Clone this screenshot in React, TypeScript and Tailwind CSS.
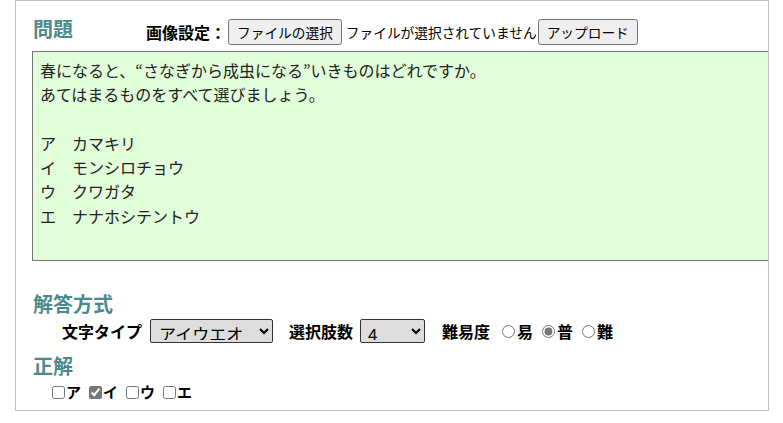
import React from "react";

const font = { fontFamily: '"Noto Sans CJK JP", "Noto Sans", sans-serif' };

const questionText = [
  "春になると、“さなぎから成虫になる”いきものはどれですか。",
  "あてはまるものをすべて選びましょう。",
  "",
  "ア　カマキリ",
  "イ　モンシロチョウ",
  "ウ　クワガタ",
  "エ　ナナホシテントウ",
].join("\n");

const answers = [
  { label: "ア", checked: false },
  { label: "イ", checked: true },
  { label: "ウ", checked: false },
  { label: "エ", checked: false },
];

const levels = [
  { label: "易", checked: false },
  { label: "普", checked: true },
  { label: "難", checked: false },
];

function SectionTitle({ children }: { children: React.ReactNode }) {
  return (
    <div className="ml-[1px] h-[28px] text-[20px] leading-[28px] font-bold text-[#4b8a8b]">
      {children}
    </div>
  );
}

function Button({ children }: { children: React.ReactNode }) {
  return (
    <button
      type="button"
      className="h-[26px] px-[8px] text-[13.7px] leading-[24px] text-black bg-[#efefef] border border-[#767676] rounded-[3px]"
    >
      {children}
    </button>
  );
}

export default function App() {
  return (
    <div className="bg-white w-[783px] h-[423px] text-black" style={font}>
      <div className="ml-[15px] w-[754px] h-[411px] border border-[#c0c0c0] overflow-hidden pl-[16px]">
        {/* 問題 */}
        <div className="mt-[18px] flex items-center h-[26px]">
          <div className="w-[113px] ml-[1px] pb-[7px] text-[20px] leading-[28px] font-bold text-[#4b8a8b]">
            問題
          </div>
          <span className="text-[16px] font-bold leading-[26px]">画像設定：</span>
          <span className="ml-[2px]">
            <Button>ファイルの選択</Button>
          </span>
          <span className="ml-[4px] text-[13.7px] leading-[26px]">ファイルが選択されていません</span>
          <span className="ml-[1px]">
            <Button>アップロード</Button>
          </span>
        </div>

        <textarea
          readOnly
          value={questionText}
          className="block mt-[6px] w-[780px] h-[210px] pt-[6px] px-[7px] resize-none border border-[#767676] bg-[#e1fdd9] text-[16px] leading-[24.3px] text-[#222] outline-none"
        />

        {/* 解答方式 */}
        <div className="mt-[29px]">
          <SectionTitle>解答方式</SectionTitle>
        </div>
        <div className="mt-[1px] flex items-center h-[24px] pl-[30px] text-[16px] font-bold">
          <span>文字タイプ</span>
          <select
            defaultValue="aiueo"
            className="ml-[8px] w-[123px] h-[24px] pl-[4px] pb-[2px] bg-[#dddddd] border border-[#333] rounded-[2px] text-[17px] leading-[20px] font-normal"
          >
            <option value="aiueo">アイウエオ</option>
            <option value="abc">ABC</option>
            <option value="123">123</option>
          </select>
          <span className="ml-[16px]">選択肢数</span>
          <select
            defaultValue="4"
            className="ml-[7px] w-[65px] h-[24px] pl-[3px] pb-[2px] bg-[#dddddd] border border-[#333] rounded-[2px] text-[17px] leading-[20px] font-normal"
          >
            <option value="2">2</option>
            <option value="3">3</option>
            <option value="4">4</option>
            <option value="5">5</option>
          </select>
          <span className="ml-[17px]">難易度</span>
          <div className="ml-[12px] flex items-center">
            {levels.map((lv, i) => (
              <label key={lv.label} className={`flex items-center ${i > 0 ? "ml-[9px]" : ""}`}>
                <input
                  type="radio"
                  name="level"
                  defaultChecked={lv.checked}
                  className="m-0 w-[13px] h-[13px] accent-[#777777]"
                />
                <span className="ml-[2px]">{lv.label}</span>
              </label>
            ))}
          </div>
        </div>

        {/* 正解 */}
        <div className="mt-[9px]">
          <SectionTitle>正解</SectionTitle>
        </div>
        <div className="mt-[2px] flex items-center h-[20px] pl-[20px] text-[15px] font-bold">
          {answers.map((a, i) => (
            <label key={a.label} className={`flex items-center ${i > 0 ? "ml-[8px]" : ""}`}>
              <input
                type="checkbox"
                defaultChecked={a.checked}
                className="m-0 w-[13px] h-[13px] accent-[#777777]"
              />
              <span className="ml-[1px]">{a.label}</span>
            </label>
          ))}
        </div>
      </div>
    </div>
  );
}
